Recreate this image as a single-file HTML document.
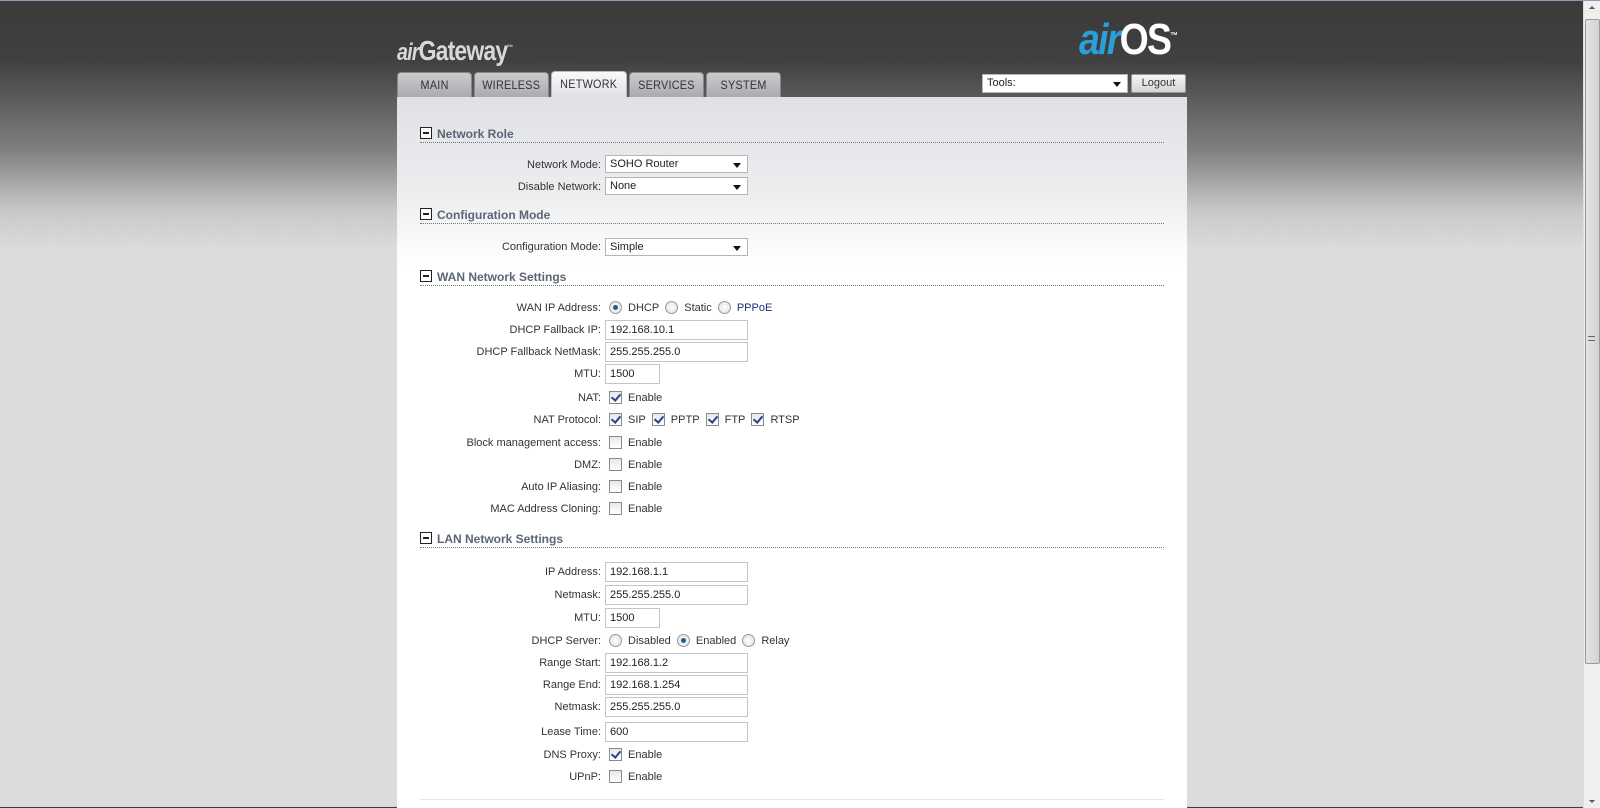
<!DOCTYPE html>
<html><head><meta charset="utf-8">
<style>
*{margin:0;padding:0;box-sizing:border-box}
body{width:1600px;height:807px;overflow:hidden;position:relative;font-family:"Liberation Sans",Arial,sans-serif;font-size:12px;color:#333;
background:linear-gradient(#3b3b3b 0px,#404040 60px,#808080 150px,#c8c8c8 210px,#dcdcdc 250px,#dcdcdc 807px);border-top:1px solid #8a9bb5}
#sb{position:absolute;left:1583px;top:0;width:17px;height:807px;background:#efefef;border-left:1px solid #ddd}
#thumb{position:absolute;left:1px;top:18px;width:15px;height:645px;background:linear-gradient(90deg,#e4e4e4,#d2d2d2);border:1px solid #999;border-radius:2px}
#panel{position:absolute;left:397px;top:96px;width:790px;height:711px;background:linear-gradient(#dfe1e4 0,#eceef0 100px,#fff 170px,#fff)}
.tab{position:absolute;top:71px;height:25px;border-radius:4px 4px 0 0;background:linear-gradient(#c9cbce,#a9abae);text-align:center;line-height:24px;font-size:12px;color:#333;border:1px solid #888;border-bottom:none;letter-spacing:.3px}
.tab span{display:inline-block;transform:scaleX(.9)}
.tab.act{background:linear-gradient(#fafafa,#dfe1e4);border-color:#bbb;top:70px;height:26px}
.logo1{position:absolute;left:397px;top:34px;color:#d8d8d8;font-size:28px;font-weight:bold;letter-spacing:-1px;transform:scaleX(.82);transform-origin:left}
.logo1 i{font-size:24px}
.logo2{position:absolute;left:1079px;top:14px;font-size:44px;font-weight:bold;letter-spacing:-2px;transform:scaleX(.85);transform-origin:left}
.sel{position:absolute;background:#fff;border:1px solid #b5b5b5;height:18px;line-height:16px;padding-left:4px;font-size:11px;color:#222}
.sel:after{content:"";position:absolute;right:6px;top:7px;border:4px solid transparent;border-top:5px solid #111;border-bottom:none}
.inp{position:absolute;background:#fff;border:1px solid #c5c5c5;height:20px;line-height:18px;padding-left:4px;font-size:11px;color:#222}
.h{position:absolute;left:420px;width:744px;height:16px;border-bottom:1px dotted #777;font-weight:bold;font-size:12px;color:#5b6576}
.h b{display:inline-block;width:12px;height:12px;border:1px solid #222;background:#fff;position:relative;vertical-align:-1px;margin-right:5px}
.h b:after{content:"";position:absolute;left:2px;right:2px;top:4px;height:2px;background:#222}
.l{position:absolute;right:999px;font-size:11px;color:#333;text-align:right;white-space:nowrap;line-height:14px}
.o{position:absolute;left:609px;font-size:11px;white-space:nowrap;line-height:14px}
.cb{display:inline-block;width:13px;height:13px;border:1px solid #8a8a8a;background:linear-gradient(#e8e8e8,#fff);vertical-align:-3px;margin-right:6px;position:relative}
.cb.c:after{content:"";position:absolute;left:3px;top:0px;width:4px;height:7px;border:solid #2a3f8f;border-width:0 2px 2px 0;transform:rotate(40deg)}
.rd{display:inline-block;width:13px;height:13px;border:1px solid #999;border-radius:50%;background:radial-gradient(#fff,#ddd);vertical-align:-3px;margin-right:6px;position:relative}
.rd.c:after{content:"";position:absolute;left:3px;top:3px;width:5px;height:5px;border-radius:50%;background:#1d5f8a}
.sp{margin-right:3px}
</style></head><body>
<div class="logo1"><i>air</i>Gateway<sup style="font-size:7px">™</sup></div>
<div class="logo2"><span style="color:#2aa0d8;font-style:italic">air</span><span style="color:#fff">OS</span><sup style="font-size:9px;color:#fff">™</sup></div>
<div class="sel" style="left:982px;top:73px;width:146px;height:19px">Tools:</div>
<div style="position:absolute;left:1131px;top:73px;width:55px;height:19px;border:1px solid #999;border-radius:2px;background:linear-gradient(#f5f5f5,#d5d5d5);text-align:center;line-height:17px;font-size:11px">Logout</div>
<div class="tab" style="left:397px;width:75px"><span>MAIN</span></div>
<div class="tab" style="left:474px;width:75px"><span>WIRELESS</span></div>
<div class="tab act" style="left:551px;width:76px"><span>NETWORK</span></div>
<div class="tab" style="left:629px;width:75px"><span>SERVICES</span></div>
<div class="tab" style="left:706px;width:75px"><span>SYSTEM</span></div>
<div id="panel"></div>

<div class="h" style="top:126px"><b></b>Network Role</div>
<div class="l" style="top:157px">Network Mode:</div><div class="sel" style="left:605px;top:154px;width:143px">SOHO Router</div>
<div class="l" style="top:179px">Disable Network:</div><div class="sel" style="left:605px;top:176px;width:143px">None</div>

<div class="h" style="top:207px"><b></b>Configuration Mode</div>
<div class="l" style="top:239px">Configuration Mode:</div><div class="sel" style="left:605px;top:237px;width:143px">Simple</div>

<div class="h" style="top:269px"><b></b>WAN Network Settings</div>
<div class="l" style="top:300px">WAN IP Address:</div><div class="o" style="top:300px"><span class="rd c"></span><span class="sp">DHCP</span> <span class="rd"></span><span class="sp">Static</span> <span class="rd"></span><span style="color:#1f2f7a">PPPoE</span></div>
<div class="l" style="top:322px">DHCP Fallback IP:</div><div class="inp" style="left:605px;top:319px;width:143px">192.168.10.1</div>
<div class="l" style="top:344px">DHCP Fallback NetMask:</div><div class="inp" style="left:605px;top:341px;width:143px">255.255.255.0</div>
<div class="l" style="top:366px">MTU:</div><div class="inp" style="left:605px;top:363px;width:55px">1500</div>
<div class="l" style="top:390px">NAT:</div><div class="o" style="top:390px"><span class="cb c"></span>Enable</div>
<div class="l" style="top:412px">NAT Protocol:</div><div class="o" style="top:412px"><span class="cb c"></span><span class="sp">SIP</span> <span class="cb c"></span><span class="sp">PPTP</span> <span class="cb c"></span><span class="sp">FTP</span> <span class="cb c"></span>RTSP</div>
<div class="l" style="top:435px">Block management access:</div><div class="o" style="top:435px"><span class="cb"></span>Enable</div>
<div class="l" style="top:457px">DMZ:</div><div class="o" style="top:457px"><span class="cb"></span>Enable</div>
<div class="l" style="top:479px">Auto IP Aliasing:</div><div class="o" style="top:479px"><span class="cb"></span>Enable</div>
<div class="l" style="top:501px">MAC Address Cloning:</div><div class="o" style="top:501px"><span class="cb"></span>Enable</div>

<div class="h" style="top:531px"><b></b>LAN Network Settings</div>
<div class="l" style="top:564px">IP Address:</div><div class="inp" style="left:605px;top:561px;width:143px">192.168.1.1</div>
<div class="l" style="top:587px">Netmask:</div><div class="inp" style="left:605px;top:584px;width:143px">255.255.255.0</div>
<div class="l" style="top:610px">MTU:</div><div class="inp" style="left:605px;top:607px;width:55px">1500</div>
<div class="l" style="top:633px">DHCP Server:</div><div class="o" style="top:633px"><span class="rd"></span><span class="sp">Disabled</span> <span class="rd c"></span><span class="sp">Enabled</span> <span class="rd"></span>Relay</div>
<div class="l" style="top:655px">Range Start:</div><div class="inp" style="left:605px;top:652px;width:143px">192.168.1.2</div>
<div class="l" style="top:677px">Range End:</div><div class="inp" style="left:605px;top:674px;width:143px">192.168.1.254</div>
<div class="l" style="top:699px">Netmask:</div><div class="inp" style="left:605px;top:696px;width:143px">255.255.255.0</div>
<div class="l" style="top:724px">Lease Time:</div><div class="inp" style="left:605px;top:721px;width:143px">600</div>
<div class="l" style="top:747px">DNS Proxy:</div><div class="o" style="top:747px"><span class="cb c"></span>Enable</div>
<div class="l" style="top:769px">UPnP:</div><div class="o" style="top:769px"><span class="cb"></span>Enable</div>
<div style="position:absolute;left:420px;top:798px;width:744px;border-top:1px solid #e2e6ea"></div>

<div id="sb"><div id="thumb"></div>
<div style="position:absolute;left:5px;top:5px;border:3px solid transparent;border-bottom:3px solid #555;border-top:none"></div>
<div style="position:absolute;left:4px;top:335px;width:7px;height:5px;border-top:1px solid #666;border-bottom:1px solid #666"></div>
<div style="position:absolute;left:5px;bottom:5px;border:3px solid transparent;border-top:3px solid #555;border-bottom:none"></div>
</div>
</body></html>
